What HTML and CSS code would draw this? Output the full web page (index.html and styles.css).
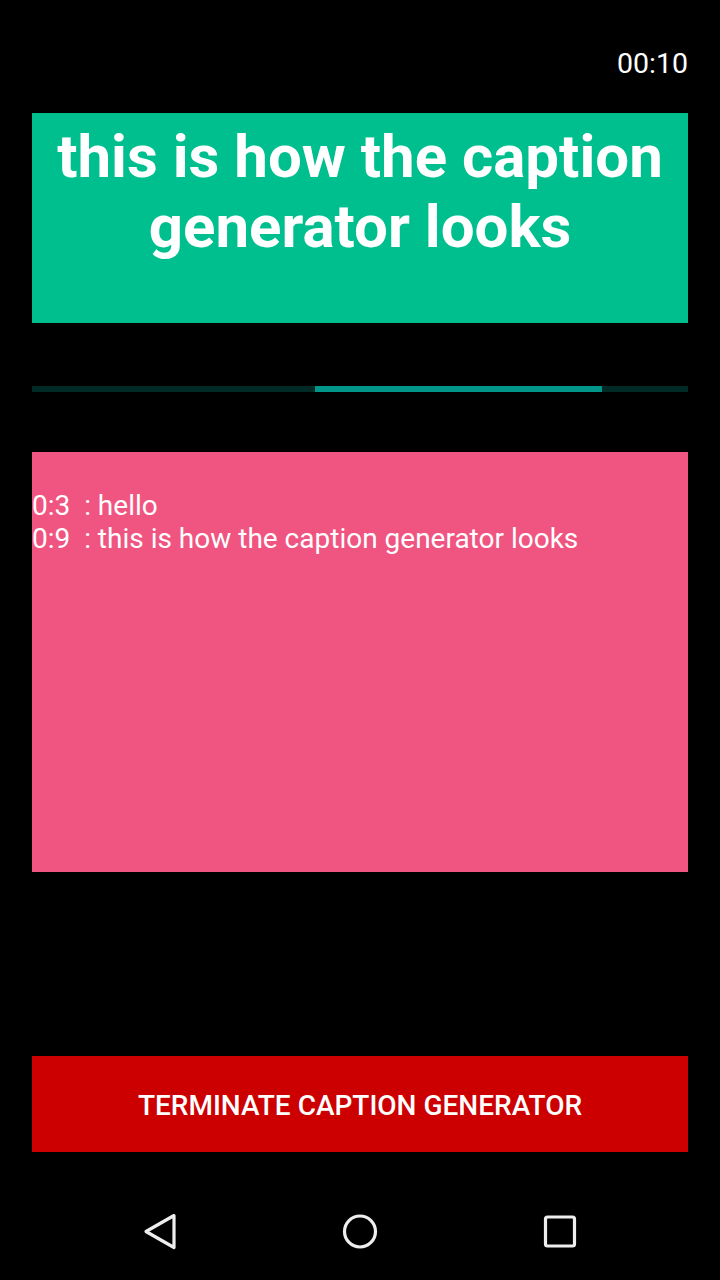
FILE: index.html
```html
<!DOCTYPE html>
<html>
<head>
<meta charset="utf-8">
<link rel="stylesheet" href="styles.css">
</head>
<body>
<div class="screen">
  <div class="status"><span class="time">00:10</span></div>
  <div class="content">
    <div class="caption">this is how the caption generator looks</div>
    <div class="progress"><div class="fill" style="left:43.14%;width:43.75%"></div></div>
    <div class="log">
      <div class="line">0:3&nbsp;&nbsp;: hello</div>
      <div class="line">0:9&nbsp;&nbsp;: this is how the caption generator looks</div>
    </div>
    <div class="spacer"></div>
    <button class="terminate">TERMINATE CAPTION GENERATOR</button>
  </div>
  <div class="navbar">
    <svg class="nav-icon" width="40" height="40" viewBox="0 0 40 40"><path d="M34 3.5 L6 19.5 L34 35.5 Z" fill="none" stroke="#eee" stroke-width="3.2" stroke-linejoin="round"/></svg>
    <svg class="nav-icon" width="40" height="40" viewBox="0 0 40 40"><circle cx="20" cy="19.5" r="15.5" fill="none" stroke="#eee" stroke-width="3.2"/></svg>
    <svg class="nav-icon" width="40" height="40" viewBox="0 0 40 40"><rect x="5.5" y="5" width="29" height="29" rx="2" fill="none" stroke="#eee" stroke-width="3.2"/></svg>
  </div>
</div>
</body>
</html>
```
FILE: styles.css
```css
html, body {
  margin: 0;
  padding: 0;
  background: #000;
}
.screen {
  width: 720px;
  height: 1280px;
  display: flex;
  flex-direction: column;
  font-family: Roboto, "Liberation Sans", sans-serif;
  color: #fff;
}
.status {
  height: 113px;
  display: flex;
  justify-content: flex-end;
  padding: 0 32px;
  box-sizing: border-box;
}
.time {
  font-size: 28.5px;
  margin-top: 46px;
  line-height: 36px;
  height: 36px;
}
.content {
  padding: 0 32px;
  display: flex;
  flex-direction: column;
  flex: 1;
}
.caption {
  background: #00bf8f;
  height: 210px;
  box-sizing: border-box;
  font-size: 60px;
  font-weight: 700;
  line-height: 70px;
  text-align: center;
  padding: 9px 10px 0;
}
.progress {
  position: relative;
  margin-top: 63px;
  height: 6px;
  background: #002a26;
}
.progress .fill {
  position: absolute;
  top: 0;
  bottom: 0;
  background: #00968a;
}
.log {
  margin-top: 60px;
  background: #f05480;
  height: 420px;
  box-sizing: border-box;
  padding-top: 37px;
  font-size: 28px;
  line-height: 33px;
}
.spacer {
  height: 184px;
}
.terminate {
  height: 96px;
  background: #cc0000;
  border: none;
  color: #fff;
  font-family: Roboto, "Liberation Sans", sans-serif;
  font-weight: 500;
  font-size: 28px;
  padding: 2px 0 0;
}
.navbar {
  height: 96px;
  margin-top: auto;
  display: flex;
  justify-content: center;
  align-items: center;
  gap: 160px;
}
.nav-icon {
  display: block;
}
```
